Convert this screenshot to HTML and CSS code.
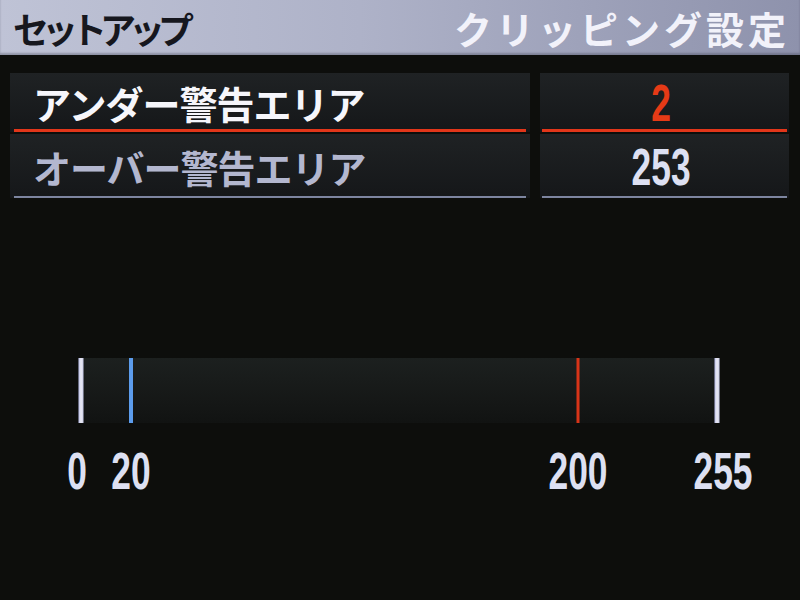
FILE: index.html
```html
<!DOCTYPE html>
<html lang="ja">
<head>
<meta charset="utf-8">
<title>クリッピング設定</title>
<link rel="stylesheet" href="styles.css">
</head>
<body>
<div class="screen">
  <header class="topbar">
    <div class="crumb">セットアップ</div>
    <div class="title">クリッピング設定</div>
  </header>
  <section class="rows">
    <div class="cell name sel"><span class="label">アンダー警告エリア</span><div class="line"></div></div>
    <div class="cell val sel"><span class="num red">2</span><div class="line"></div></div>
    <div class="cell name second"><span class="label dim">オーバー警告エリア</span><div class="line"></div></div>
    <div class="cell val second"><span class="num">253</span><div class="line"></div></div>
  </section>
  <section class="scale">
    <div class="bar">
      <div class="track">
        <div class="tick white" style="left: 0%"></div>
        <div class="tick blue" style="left: 7.843%"></div>
        <div class="tick red" style="left: 78.1%"></div>
        <div class="tick white" style="left: 100%"></div>
      </div>
    </div>
    <div class="labels">
      <span class="lab" style="left: -0.6%">0</span>
      <span class="lab" style="left: 7.843%">20</span>
      <span class="lab" style="left: 78.1%">200</span>
      <span class="lab" style="left: 101%">255</span>
    </div>
  </section>
</div>
</body>
</html>
```
FILE: styles.css
```css
html, body {
  margin: 0;
  padding: 0;
  background: #0d0e0c;
}
.screen {
  width: 800px;
  height: 600px;
  overflow: hidden;
  background: #0d0e0c;
  font-family: "Noto Sans CJK JP", "Noto Sans", sans-serif;
}
.topbar {
  height: 55px;
  display: flex;
  justify-content: space-between;
  align-items: center;
  padding: 0 10px 0 13px;
  background: linear-gradient(90deg, #bfc3d6 0%, #aeb2c8 45%, #8e92ac 100%);
  box-shadow: inset 0 -2px 2px rgba(60, 62, 80, 0.35);
}
.crumb {
  font-size: 36px;
  font-weight: 700;
  color: #16171e;
  letter-spacing: -7px;
  line-height: 1;
}
.title {
  font-size: 38px;
  font-weight: 700;
  color: #f2f2fa;
  letter-spacing: 4px;
  line-height: 1;
}
.rows {
  margin-top: 18px;
  margin-left: 10px;
  display: grid;
  grid-template-columns: 520px 249px;
  column-gap: 10px;
  row-gap: 2px;
}
.cell {
  display: flex;
  flex-direction: column;
  height: 59px;
  background: linear-gradient(180deg, #1f2224 0%, #151719 100%);
}
.cell.second {
  height: 64px;
}
.cell.sel .line {
  height: 3px;
  background: #e2361a;
}
.line {
  height: 2px;
  margin: 0 4px 0 4px;
  background: #7d85a0;
}
.cell.val .line {
  margin: 0 2px 0 2px;
}
.name .label, .val .num {
  flex: 1;
  display: flex;
  align-items: center;
}
.label {
  padding-left: 23px;
  padding-top: 4px;
  font-size: 38px;
  font-weight: 700;
  letter-spacing: -1px;
  color: #f6f6fb;
  line-height: 1;
}
.label.dim {
  color: #b3b7cf;
}
.val .num {
  justify-content: center;
  padding-right: 10px;
  padding-top: 3px;
  font-family: "Liberation Sans", Arial, sans-serif;
  font-weight: 700;
  font-size: 52px;
  line-height: 1;
  color: #dde0f2;
}
.num {
  transform: scaleX(0.68);
}
.num.red {
  color: #e63a16;
}
.scale {
  margin-top: 160px;
  margin-left: 78px;
  width: 642px;
}
.bar {
  height: 65px;
  background: linear-gradient(180deg, #1c201f 0%, #151716 70%, #111312 100%);
}
.track {
  position: relative;
  height: 100%;
  margin: 0 3px;
}
.tick {
  position: absolute;
  top: 0;
  bottom: 0;
  width: 4px;
  transform: translateX(-50%);
}
.tick.white {
  width: 5px;
  background: linear-gradient(90deg, #b8bce8 0%, #ececf4 50%, #c6c8e6 100%);
}
.tick.blue {
  width: 4px;
  background: #5c9cec;
}
.tick.red {
  width: 3px;
  background: #d83418;
}
.labels {
  position: relative;
  height: 46px;
  margin: 25px 3px 0 3px;
}
.lab {
  position: absolute;
  top: 0;
  font-family: "Liberation Sans", Arial, sans-serif;
  font-weight: 700;
  font-size: 52px;
  line-height: 46px;
  color: #dde0f2;
  transform: translateX(-50%) scaleX(0.68);
}
```
